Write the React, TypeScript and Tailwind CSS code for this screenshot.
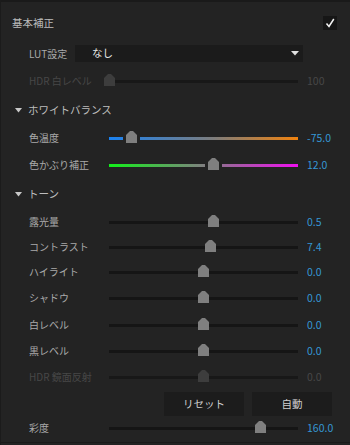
import React from "react";

const FONT = { fontFamily: '"Noto Sans CJK JP", "Noto Sans", sans-serif' };

function Thumb({ color }: { color: string }) {
  return (
    <svg width="11" height="12" viewBox="0 0 11 12" className="block">
      <polygon points="0,4 4,0 7,0 11,4 11,12 0,12" fill={color} />
    </svg>
  );
}

type SliderProps = {
  label: string;
  value: string;
  pos: number; // thumb center x relative to track start (px)
  kind?: "dark" | "temp" | "tint";
  disabled?: boolean;
  className?: string;
};

function Slider({ label, value, pos, kind = "dark", disabled, className = "" }: SliderProps) {
  const trackBg =
    kind === "temp"
      ? "bg-[linear-gradient(to_right,#1a82f2,#7d7d7d_55%,#f0820e)]"
      : kind === "tint"
      ? "bg-[linear-gradient(to_right,#12f01a,#808080_50%,#f010f0)]"
      : disabled
      ? "bg-[#181818]"
      : "bg-[#151515]";
  const gap = kind !== "dark";
  return (
    <div className={`flex h-[20px] items-center ${className}`}>
      <div
        className={`w-[108px] shrink-0 pl-[28px] text-[10px] leading-none whitespace-nowrap ${
          disabled ? "text-[#474747]" : "text-[#a9a9a9]"
        }`}
      >
        {label}
      </div>
      <div className={`relative h-[3px] w-[189px] shrink-0 ${trackBg}`}>
        {gap && (
          <div
            className="absolute top-0 h-[3px] w-[17px] bg-[#232323]"
            style={{ left: pos - 8.5 }}
          />
        )}
        <div className="absolute top-[-6px]" style={{ left: pos - 5.5 }}>
          <Thumb color={disabled ? "#3d3d3d" : "#7f7f7f"} />
        </div>
      </div>
      <div
        className={`ml-[9px] text-[10.5px] leading-none ${
          disabled ? "text-[#474747]" : "text-[#3597d4]"
        }`}
      >
        {value}
      </div>
    </div>
  );
}

function SectionHeader({ title, className = "" }: { title: string; className?: string }) {
  return (
    <div className={`flex h-[20px] items-center pl-[14px] ${className}`}>
      <svg width="7" height="5" viewBox="0 0 7 5" className="block">
        <polygon points="0,0 7,0 3.5,4.5" fill="#c8c8c8" />
      </svg>
      <span className="ml-[6px] text-[10.5px] leading-none text-[#bdbdbd]">{title}</span>
    </div>
  );
}

export default function App() {
  return (
    <div
      className="relative h-[445px] w-[350px] overflow-hidden border-l border-[#1b1b1b] bg-[#232323]"
      style={FONT}
    >
      <div className="h-[2px] w-full bg-[#1a1a1a]" />
      <div className="flex flex-col">
        {/* Title */}
        <div className="mt-[12px] flex h-[18px] items-center justify-between pl-[11px] pr-[13px]">
          <span className="text-[10.5px] leading-none text-[#bcbcbc]">基本補正</span>
          <div className="flex h-[14px] w-[14px] items-center justify-center bg-[#161616]">
            <svg width="10" height="10" viewBox="0 0 10 10">
              <path d="M1.5 5.5 L4 8.5 L8.8 1" stroke="#f2f2f2" strokeWidth="1.5" fill="none" />
            </svg>
          </div>
        </div>

        {/* LUT */}
        <div className="mt-[13px] flex h-[17px] items-center">
          <div className="w-[74px] shrink-0 pl-[28px] text-[10px] leading-none text-[#a9a9a9]">
            LUT設定
          </div>
          <div className="flex h-[17px] w-[228px] items-center justify-between bg-[#1b1b1b] pl-[17px] pr-[4px]">
            <span className="text-[10.5px] leading-none text-[#e6e6e6]">なし</span>
            <svg width="8" height="5" viewBox="0 0 8 5" className="block">
              <polygon points="0,0 8,0 4,4.5" fill="#e0e0e0" />
            </svg>
          </div>
        </div>

        <Slider label="HDR 白レベル" value="100" pos={0} disabled className="mt-[9px]" />

        <SectionHeader title="ホワイトバランス" className="mt-[9px]" />
        <Slider label="色温度" value="-75.0" pos={22} kind="temp" className="mt-[8px]" />
        <Slider label="色かぶり補正" value="12.0" pos={104} kind="tint" className="mt-[7px]" />

        <SectionHeader title="トーン" className="mt-[9px]" />
        <Slider label="露光量" value="0.5" pos={104} className="mt-[8px]" />
        <Slider label="コントラスト" value="7.4" pos={101} className="mt-[5px]" />
        <Slider label="ハイライト" value="0.0" pos={94} className="mt-[5px]" />
        <Slider label="シャドウ" value="0.0" pos={94} className="mt-[6px]" />
        <Slider label="白レベル" value="0.0" pos={94} className="mt-[7px]" />
        <Slider label="黒レベル" value="0.0" pos={94} className="mt-[6px]" />
        <Slider label="HDR 鏡面反射" value="0.0" pos={94} disabled className="mt-[6px]" />

        {/* Buttons */}
        <div className="mt-[5px] flex h-[24px] gap-[8px] pl-[163px]">
          <button className="flex h-[24px] w-[80px] items-center justify-center bg-[#1c1c1c] text-[10.5px] leading-none text-[#cfcfcf]">
            リセット
          </button>
          <button className="flex h-[24px] w-[80px] items-center justify-center bg-[#1c1c1c] text-[10.5px] leading-none text-[#cfcfcf]">
            自動
          </button>
        </div>

        <Slider label="彩度" value="160.0" pos={151} className="mt-[2px]" />
      </div>
      <div className="absolute bottom-[2px] left-0 h-[1px] w-full bg-[#1a1a1a]" />
    </div>
  );
}
